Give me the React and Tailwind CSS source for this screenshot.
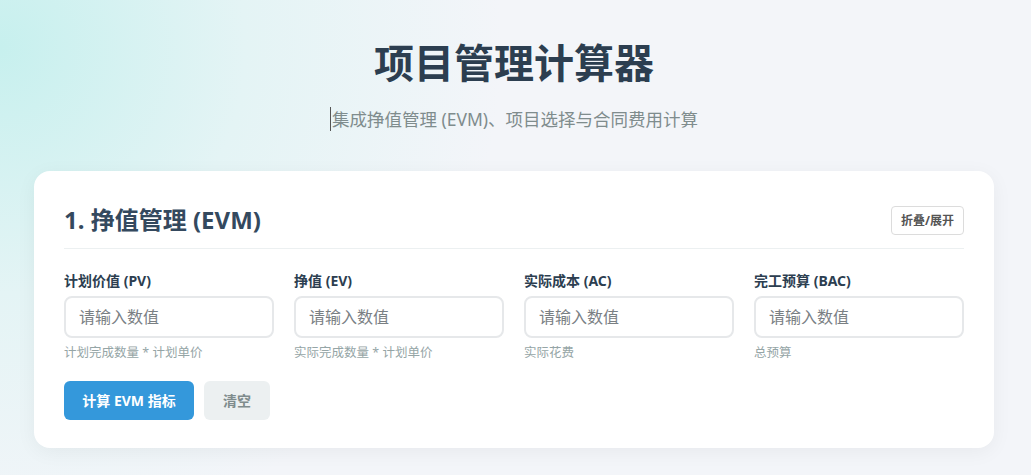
const fields = [
  { label: '计划价值 (PV)', hint: '计划完成数量 * 计划单价' },
  { label: '挣值 (EV)', hint: '实际完成数量 * 计划单价' },
  { label: '实际成本 (AC)', hint: '实际花费' },
  { label: '完工预算 (BAC)', hint: '总预算' },
];

export default function App() {
  return (
    <div
      className="min-h-screen bg-[#f3f5f9] bg-[radial-gradient(circle_at_0%_10%,#c7f0ee_0%,#e4f4f5_22%,rgba(243,245,249,0)_45%)] pl-[34px] pr-[37px] pt-[37px] pb-[26px]"
      style={{ fontFamily: '"Noto Sans", "Noto Sans CJK SC", sans-serif' }}
    >
      <header className="flex flex-col items-center">
        <h1 className="text-[40px] leading-[52px] font-bold text-[#2c3e50]">项目管理计算器</h1>
        <p className="mt-[18px] flex items-center text-[17.5px] leading-[24px] text-[#7f8c8d]">
          <span className="mr-[1px] inline-block h-[24px] w-[1px] bg-[#555]" />
          集成挣值管理 (EVM)、项目选择与合同费用计算
        </p>
      </header>

      <section className="mt-[40px] w-[960px] rounded-2xl bg-white px-[30px] pt-[32px] pb-[28px] shadow-[0_4px_20px_rgba(0,0,0,0.05)]">
        <div className="flex items-center justify-between border-b border-[#ecf0f1] pb-[11px]">
          <h2 className="text-[24px] leading-[34px] font-bold text-[#34495e]">1. 挣值管理 (EVM)</h2>
          <button className="rounded-[4px] border border-[#dcdcdc] bg-white px-[9px] py-[4px] text-[12px] leading-[19px] font-bold text-[#555]">
            折叠/展开
          </button>
        </div>

        <div className="mt-[22px] grid grid-cols-4 gap-x-[20px]">
          {fields.map((f) => (
            <div key={f.label} className="flex flex-col">
              <label className="text-[14px] leading-[20px] font-bold text-[#2c3e50]">{f.label}</label>
              <input
                placeholder="请输入数值"
                className="mt-[5px] h-[42px] rounded-lg border-2 border-[#e6e8ea] px-[13px] text-[16px] text-[#2c3e50] outline-none placeholder:text-[#7a8084]"
              />
              <span className="mt-[7px] text-[12.5px] leading-[16px] text-[#95a5a6]">{f.hint}</span>
            </div>
          ))}
        </div>

        <div className="mt-[20px] flex gap-[10px]">
          <button className="h-[39px] w-[130px] rounded-md bg-[#3498db] text-[14px] font-bold text-white">
            计算 EVM 指标
          </button>
          <button className="h-[39px] w-[66px] rounded-md bg-[#ecf0f1] text-[14px] font-bold text-[#7f8c8d]">
            清空
          </button>
        </div>
      </section>
    </div>
  );
}
